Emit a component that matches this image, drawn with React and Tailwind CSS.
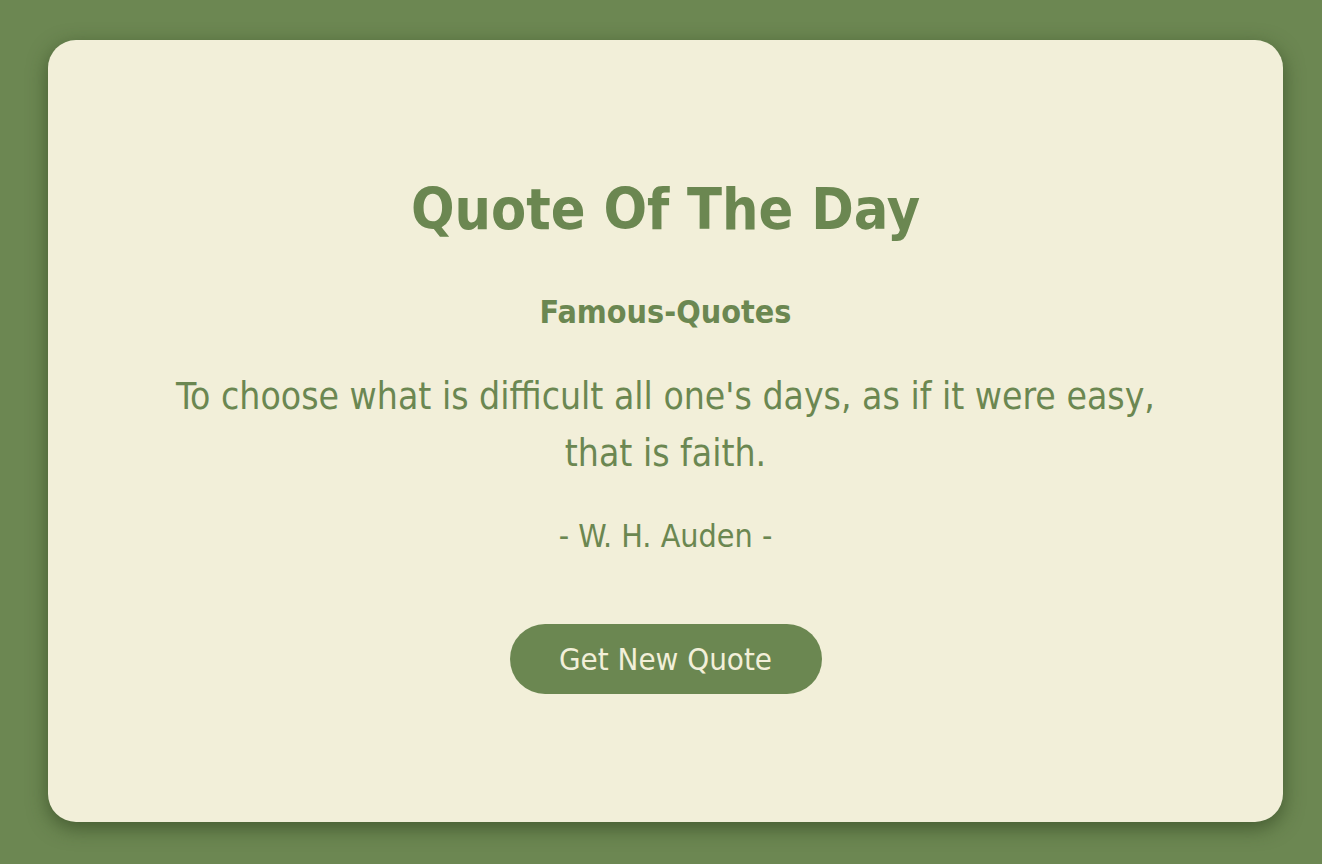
export default function App() {
  return (
    <div
      className="w-full h-[864px] bg-[#6c8752] pl-12 pr-[39px] pt-10"
      style={{ fontFamily: '"DejaVu Sans Condensed", "DejaVu Sans", sans-serif' }}
    >
      <div className="h-[782px] rounded-[28px] bg-[#f2efd9] shadow-[0_6px_20px_rgba(40,60,25,0.6)] flex flex-col items-center text-center text-[#6b8751] px-24 pt-[141px]">
        <h1 className="text-[57px] font-bold leading-none">Quote Of The Day</h1>
        <h2 className="text-[32px] font-bold mt-[58px] leading-none">Famous-Quotes</h2>
        <p className="text-[37px] leading-[57px] mt-[40px]">
          To choose what is difficult all one's days, as if it were easy, that is faith.
        </p>
        <p className="text-[32px] mt-[38px] leading-none">- W. H. Auden -</p>
        <button className="mt-[72px] w-[312px] h-[70px] rounded-[35px] bg-[#6b8751] text-[#f2efd9] text-[31px] leading-none">
          Get New Quote
        </button>
      </div>
    </div>
  );
}
